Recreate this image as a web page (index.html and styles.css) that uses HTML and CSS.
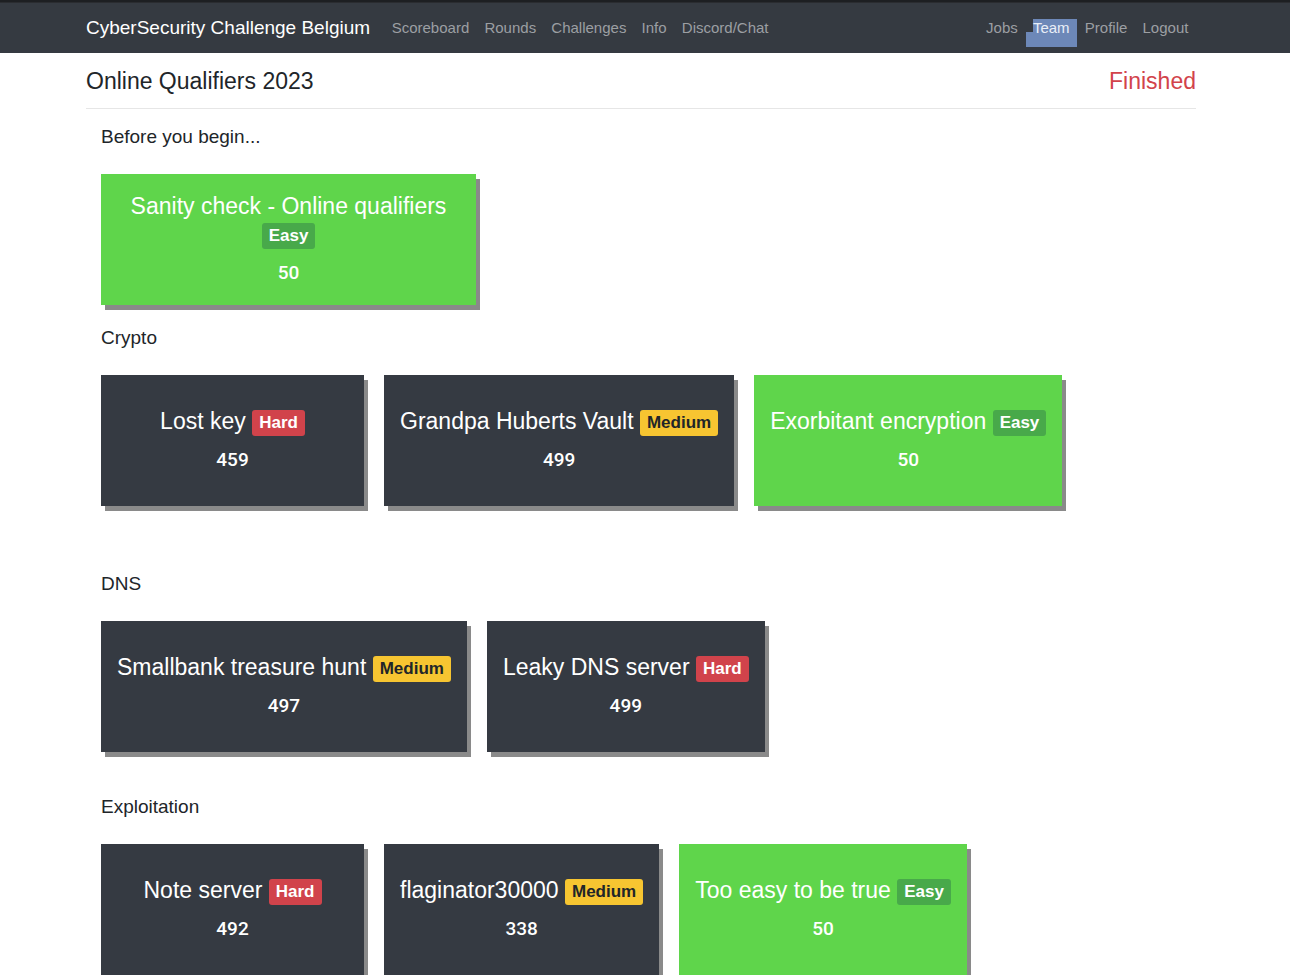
FILE: index.html
```html
<!DOCTYPE html>
<html>
<head>
<meta charset="utf-8">
<title>Online Qualifiers 2023</title>
<link rel="stylesheet" href="styles.css">
</head>
<body>
<div class="topstrip"></div>
<nav class="navbar">
  <div class="nav-inner">
    <a class="brand">CyberSecurity Challenge Belgium</a>
    <ul class="nav-links">
      <li><a class="nav-link">Scoreboard</a></li>
      <li><a class="nav-link">Rounds</a></li>
      <li><a class="nav-link">Challenges</a></li>
      <li><a class="nav-link">Info</a></li>
      <li><a class="nav-link">Discord/Chat</a></li>
    </ul>
    <ul class="nav-links nav-right">
      <li><a class="nav-link">Jobs</a></li>
      <li><a class="nav-link selected"><span>Team</span></a></li>
      <li><a class="nav-link">Profile</a></li>
      <li><a class="nav-link">Logout</a></li>
    </ul>
  </div>
</nav>

<main class="container">
  <header class="page-head">
    <h2 class="page-title">Online Qualifiers 2023</h2>
    <span class="status">Finished</span>
  </header>

  <section class="category first">
    <h3 class="cat-title">Before you begin...</h3>
    <div class="cards">
      <div class="card solved wide">
        <div class="card-title">Sanity check - Online qualifiers <span class="badge easy">Easy</span></div>
        <div class="card-score">50</div>
      </div>
    </div>
  </section>

  <section class="category">
    <h3 class="cat-title">Crypto</h3>
    <div class="cards">
      <div class="card">
        <div class="card-title">Lost key <span class="badge hard">Hard</span></div>
        <div class="card-score">459</div>
      </div>
      <div class="card">
        <div class="card-title">Grandpa Huberts Vault <span class="badge medium">Medium</span></div>
        <div class="card-score">499</div>
      </div>
      <div class="card solved">
        <div class="card-title">Exorbitant encryption <span class="badge easy">Easy</span></div>
        <div class="card-score">50</div>
      </div>
    </div>
  </section>

  <section class="category spaced-lg">
    <h3 class="cat-title">DNS</h3>
    <div class="cards">
      <div class="card">
        <div class="card-title">Smallbank treasure hunt <span class="badge medium">Medium</span></div>
        <div class="card-score">497</div>
      </div>
      <div class="card">
        <div class="card-title">Leaky DNS server <span class="badge hard">Hard</span></div>
        <div class="card-score">499</div>
      </div>
    </div>
  </section>

  <section class="category spaced-md">
    <h3 class="cat-title">Exploitation</h3>
    <div class="cards">
      <div class="card">
        <div class="card-title">Note server <span class="badge hard">Hard</span></div>
        <div class="card-score">492</div>
      </div>
      <div class="card">
        <div class="card-title">flaginator30000 <span class="badge medium">Medium</span></div>
        <div class="card-score">338</div>
      </div>
      <div class="card solved">
        <div class="card-title">Too easy to be true <span class="badge easy">Easy</span></div>
        <div class="card-score">50</div>
      </div>
    </div>
  </section>
</main>
</body>
</html>
```

FILE: styles.css
```css
* { box-sizing: border-box; }

html, body {
  margin: 0;
  padding: 0;
  background: #ffffff;
  font-family: "Liberation Sans", Arial, Helvetica, sans-serif;
  color: #212529;
}

.topstrip {
  height: 3px;
  background: #1d1f22;
  border-bottom: 1px solid #2a2c30;
}

.navbar {
  height: 50px;
  background: #353a41;
}

.nav-inner {
  width: 1110px;
  margin-left: 86px;
  height: 100%;
  display: flex;
  align-items: center;
}

.brand {
  font-size: 19px;
  color: #ffffff;
  margin-right: 14px;
  white-space: nowrap;
}

.nav-links {
  list-style: none;
  margin: 0;
  padding: 0;
  display: flex;
  align-items: center;
}

.nav-right { margin-left: auto; }

.nav-link {
  display: block;
  position: relative;
  font-size: 15px;
  line-height: 20px;
  padding: 0 7.6px;
  color: #9c9fa3;
}

.nav-link.selected { color: #e9eef7; }
.nav-link.selected span { position: relative; z-index: 1; }

.nav-link.selected::before {
  content: "";
  position: absolute;
  left: 8px;
  right: 0;
  top: 1px;
  height: 14px;
  background: #6d88b8;
}

.nav-link.selected::after {
  content: "";
  position: absolute;
  left: 1px;
  right: 0;
  top: 14px;
  height: 15px;
  background: #6d88b8;
}

.container {
  width: 1110px;
  margin-left: 86px;
}

.page-head {
  display: flex;
  justify-content: space-between;
  align-items: center;
  height: 56px;
  border-bottom: 1px solid #e6e6e6;
}

.page-title {
  margin: 0;
  font-size: 23px;
  font-weight: normal;
  line-height: 28px;
}

.status {
  font-size: 23px;
  line-height: 28px;
  color: #d2434b;
}

.category { padding-left: 15px; margin-top: 22px; }
.category.first { margin-top: 17px; }
.category.spaced-lg { margin-top: 67px; }
.category.spaced-md { margin-top: 44px; }

.cat-title {
  margin: 0 0 26px 0;
  font-size: 19px;
  font-weight: normal;
  line-height: 22px;
}

.cards {
  display: flex;
  flex-wrap: wrap;
  gap: 20px;
}

.card {
  height: 131px;
  min-width: 263px;
  max-width: 375px;
  padding: 0 16px 3px;
  background: #353a42;
  color: #ffffff;
  box-shadow: 4px 5px 0 #8a8a8a;
  display: flex;
  flex-direction: column;
  justify-content: center;
  align-items: center;
  text-align: center;
  gap: 12px;
}

.card.wide { width: 375px; }

.card.solved { background: #5fd54b; }

.card-title {
  font-size: 23px;
  line-height: 28px;
}

.card-score {
  font-family: Roboto, "Liberation Sans", sans-serif;
  font-size: 19px;
  font-weight: 500;
  line-height: 23px;
}

.badge {
  display: inline-block;
  font-size: 17px;
  font-weight: bold;
  line-height: 17px;
  padding: 4px 7px 5px;
  border-radius: 3px;
  vertical-align: 1px;
  color: #ffffff;
}

.badge.hard { background: #d1434b; }
.badge.medium { background: #f7c531; color: #212529; }
.badge.easy { background: #48a94a; }
```
